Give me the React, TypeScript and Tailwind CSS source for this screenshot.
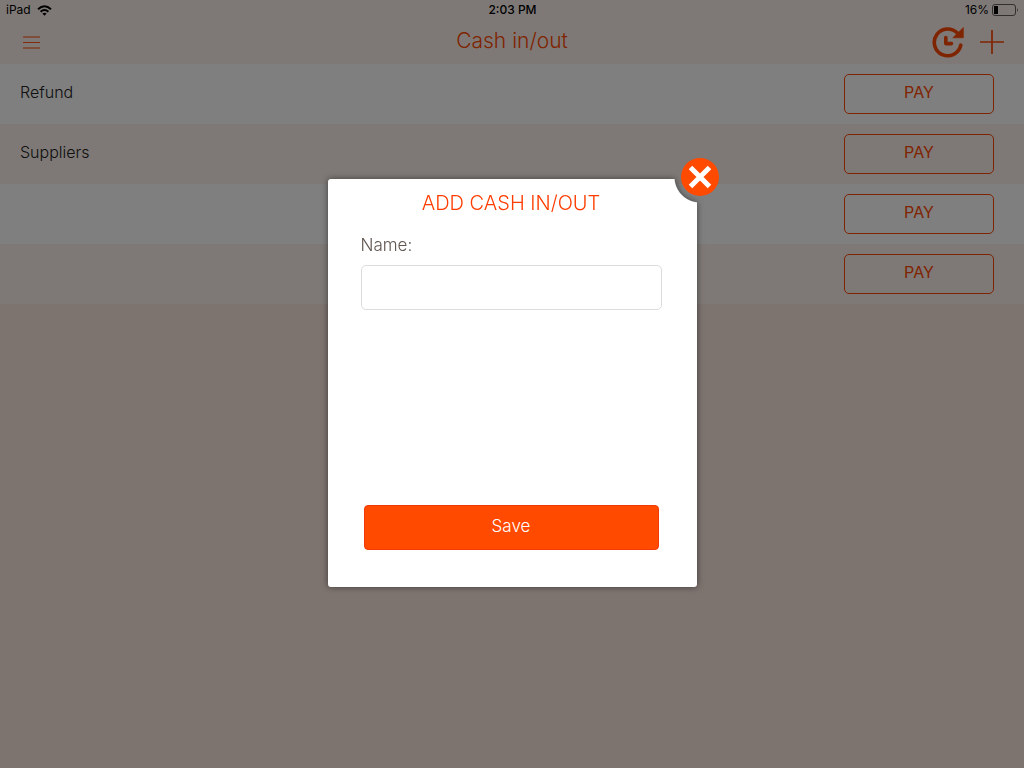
import React from "react";

const rows = ["Refund", "Suppliers", "", ""];

function StatusBar() {
  return (
    <div className="grid h-5 grid-cols-3 items-center pl-1.5 pr-[5px] text-xs text-black">
      <div className="flex items-center gap-1.5">
        <span>iPad</span>
        <svg width="15" height="11" viewBox="0 0 15 11" fill="none" stroke="#000" strokeWidth="2" aria-hidden="true">
          <path d="M1 4.2Q7.5 -1.8 14 4.2" />
          <path d="M3.6 6.8Q7.5 3.2 11.4 6.8" />
          <path d="M5.4 8.6Q7.5 6.8 9.6 8.6L7.5 10.8Z" fill="#000" stroke="none" />
        </svg>
      </div>
      <div className="text-center font-medium">2:03 PM</div>
      <div className="flex items-center justify-end gap-[3px]">
        <span>16%</span>
        <svg width="27" height="12" viewBox="0 0 27 12" aria-hidden="true">
          <rect x="0.5" y="0.5" width="23" height="11" rx="2.5" fill="none" stroke="#000" strokeOpacity="0.6" />
          <rect x="2" y="2" width="4" height="8" fill="#000" />
          <path d="M25 4Q26.8 6 25 8Z" fill="#000" fillOpacity="0.7" />
        </svg>
      </div>
    </div>
  );
}

function Header() {
  return (
    <header className="bg-[#fcf2ed]">
      <StatusBar />
      <div className="grid h-11 grid-cols-[1fr_auto_1fr] items-center px-5 text-[#ff4800]">
        <button type="button" aria-label="Menu" className="flex h-6 w-6 items-center justify-center">
          <svg width="18" height="14" viewBox="0 0 18 14" stroke="currentColor" aria-hidden="true">
            <path d="M0 2H17M0 13H17" strokeWidth="2" strokeOpacity="0.5" />
            <path d="M0 7.5H17" strokeOpacity="0.9" />
          </svg>
        </button>
        <h1 className="pb-0.5 text-[21px] font-light">Cash in/out</h1>
        <div className="flex items-center justify-end gap-[15px]">
          <button type="button" aria-label="History">
            <svg width="34" height="32" viewBox="0 0 34 32" fill="none" stroke="currentColor" aria-hidden="true">
              <path d="M26.5 7.2A13.4 13.4 0 1 0 29.8 19.2" strokeWidth="3.6" strokeLinecap="round" />
              <path d="M32.4 1.4V11.8H21.8Z" fill="currentColor" stroke="currentColor" strokeWidth="0.6" strokeLinejoin="round" />
              <path d="M14.8 11.5V17.6H20.5" strokeWidth="3.6" strokeLinecap="round" strokeLinejoin="round" />
            </svg>
          </button>
          <button type="button" aria-label="Add">
            <svg width="24" height="24" viewBox="0 0 24 24" stroke="currentColor" strokeWidth="1.7" aria-hidden="true">
              <path d="M0 12H24M12 0V24" />
            </svg>
          </button>
        </div>
      </div>
    </header>
  );
}

function AddDialog() {
  return (
    <div className="fixed inset-0 flex items-center justify-center bg-black/50">
      <div role="dialog" aria-modal="true" aria-labelledby="dialog-title" className="relative mb-0.5 w-[369px]">
        <div className="drop-shadow-[0_0_3px_rgba(0,0,0,0.5)]">
          <form
            onSubmit={(event) => event.preventDefault()}
            className="flex min-h-[408px] flex-col rounded-[3px] bg-[radial-gradient(circle_at_calc(100%_+_3px)_-2px,transparent_25px,white_26px)] pb-[37px] pl-[33px] pr-[35px] pt-2.5"
          >
            <h2 id="dialog-title" className="text-center text-xl font-light text-[#ff3c00]">ADD CASH IN/OUT</h2>
            <label htmlFor="name" className="mt-4 text-[17px] font-light leading-6 text-[#5f544e]">Name:</label>
            <input
              id="name"
              type="text"
              className="mt-2 h-[45px] w-full rounded-[5px] border border-[#dcdcdc] bg-white px-3 text-[17px] text-[#5f544e] outline-none"
            />
            <button type="submit" className="mx-[3px] mt-auto h-[45px] rounded-[4px] border border-[#f03a08] bg-[#ff4a00] pb-0.5 text-[17px] font-light text-white">
              Save
            </button>
          </form>
        </div>
        <button
          type="button"
          aria-label="Close"
          className="absolute -right-[22px] -top-[21px] flex h-[38px] w-[38px] items-center justify-center rounded-full bg-[#ff4a00]"
        >
          <svg width="24" height="24" viewBox="0 0 24 24" stroke="#fff" strokeWidth="5" aria-hidden="true">
            <path d="M2.5 2.5L21.5 21.5M21.5 2.5L2.5 21.5" />
          </svg>
        </button>
      </div>
    </div>
  );
}

export default function App() {
  return (
    <div className="min-h-screen bg-[#fae7df] font-['Inter','Liberation_Sans',sans-serif]">
      <Header />
      <ul>
        {rows.map((name, index) => (
          <li key={index} className="flex h-[60px] items-center justify-between pl-5 pr-[30px] odd:bg-white even:bg-[#fcf2ed]">
            <span className="pb-1 text-base font-light text-[#222]">{name}</span>
            <button type="button" className="h-10 w-[150px] rounded-[5px] border border-[#ff4800] pb-1 text-base text-[#ff4800]">
              PAY
            </button>
          </li>
        ))}
      </ul>
      <AddDialog />
    </div>
  );
}
